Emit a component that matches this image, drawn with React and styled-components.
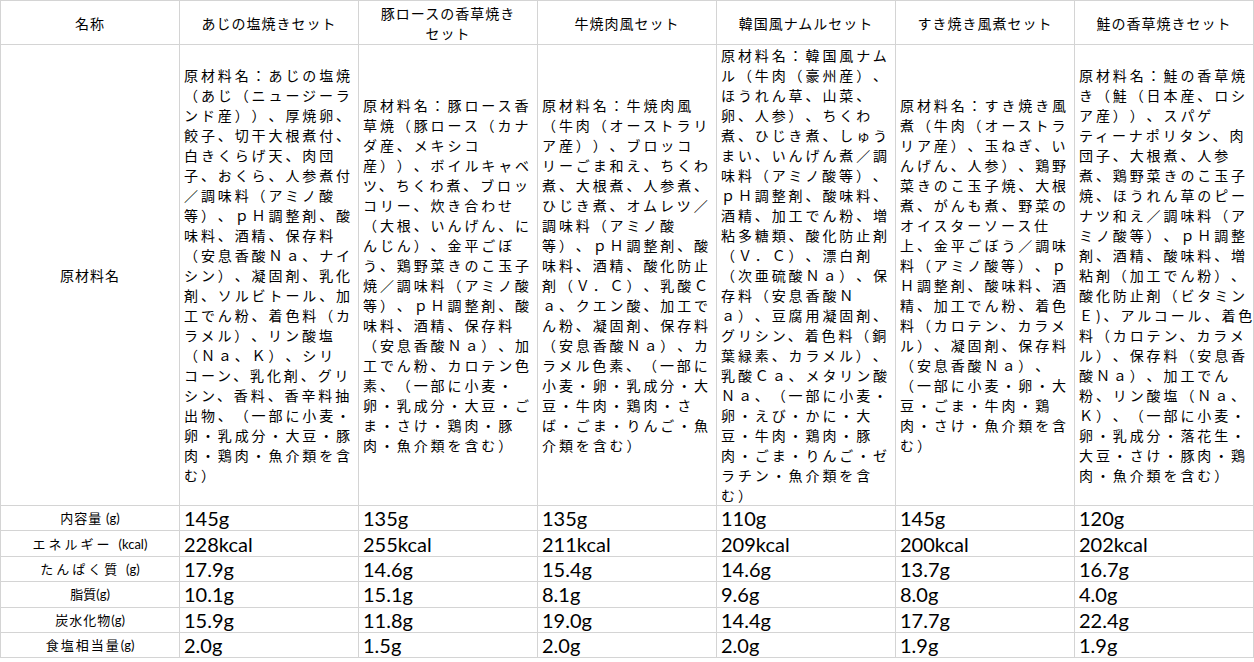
import styled, { createGlobalStyle } from 'styled-components';

const products = [
  {
    name: ['あじの塩焼きセット'],
    ingredients: [
      '原材料名：あじの塩焼',
      '（あじ（ニュージーラ',
      'ンド産））、厚焼卵、',
      '餃子、切干大根煮付、',
      '白きくらげ天、肉団',
      '子、おくら、人参煮付',
      '／調味料（アミノ酸',
      '等）、ｐＨ調整剤、酸',
      '味料、酒精、保存料',
      '（安息香酸Ｎａ、ナイ',
      'シン）、凝固剤、乳化',
      '剤、ソルビトール、加',
      '工でん粉、着色料（カ',
      'ラメル）、リン酸塩',
      '（Ｎａ、Ｋ）、シリ',
      'コーン、乳化剤、グリ',
      'シン、香料、香辛料抽',
      '出物、（一部に小麦・',
      '卵・乳成分・大豆・豚',
      '肉・鶏肉・魚介類を含',
      'む）',
    ],
    values: ['145g', '228kcal', '17.9g', '10.1g', '15.9g', '2.0g'],
  },
  {
    name: ['豚ロースの香草焼き', 'セット'],
    ingredients: [
      '原材料名：豚ロース香',
      '草焼（豚ロース（カナ',
      'ダ産、メキシコ',
      '産））、ボイルキャベ',
      'ツ、ちくわ煮、ブロッ',
      'コリー、炊き合わせ',
      '（大根、いんげん、に',
      'んじん）、金平ごぼ',
      'う、鶏野菜きのこ玉子',
      '焼／調味料（アミノ酸',
      '等）、ｐＨ調整剤、酸',
      '味料、酒精、保存料',
      '（安息香酸Ｎａ）、加',
      '工でん粉、カロテン色',
      '素、（一部に小麦・',
      '卵・乳成分・大豆・ご',
      'ま・さけ・鶏肉・豚',
      '肉・魚介類を含む）',
    ],
    values: ['135g', '255kcal', '14.6g', '15.1g', '11.8g', '1.5g'],
  },
  {
    name: ['牛焼肉風セット'],
    ingredients: [
      '原材料名：牛焼肉風',
      '（牛肉（オーストラリ',
      'ア産））、ブロッコ',
      'リーごま和え、ちくわ',
      '煮、大根煮、人参煮、',
      'ひじき煮、オムレツ／',
      '調味料（アミノ酸',
      '等）、ｐＨ調整剤、酸',
      '味料、酒精、酸化防止',
      '剤（Ｖ．Ｃ）、乳酸Ｃ',
      'ａ、クエン酸、加工で',
      'ん粉、凝固剤、保存料',
      '（安息香酸Ｎａ）、カ',
      'ラメル色素、（一部に',
      '小麦・卵・乳成分・大',
      '豆・牛肉・鶏肉・さ',
      'ば・ごま・りんご・魚',
      '介類を含む）',
    ],
    values: ['135g', '211kcal', '15.4g', '8.1g', '19.0g', '2.0g'],
  },
  {
    name: ['韓国風ナムルセット'],
    ingredients: [
      '原材料名：韓国風ナム',
      'ル（牛肉（豪州産）、',
      'ほうれん草、山菜、',
      '卵、人参）、ちくわ',
      '煮、ひじき煮、しゅう',
      'まい、いんげん煮／調',
      '味料（アミノ酸等）、',
      'ｐＨ調整剤、酸味料、',
      '酒精、加工でん粉、増',
      '粘多糖類、酸化防止剤',
      '（Ｖ．Ｃ）、漂白剤',
      '（次亜硫酸Ｎａ）、保',
      '存料（安息香酸Ｎ',
      'ａ）、豆腐用凝固剤、',
      'グリシン、着色料（銅',
      '葉緑素、カラメル）、',
      '乳酸Ｃａ、メタリン酸',
      'Ｎａ、（一部に小麦・',
      '卵・えび・かに・大',
      '豆・牛肉・鶏肉・豚',
      '肉・ごま・りんご・ゼ',
      'ラチン・魚介類を含',
      'む）',
    ],
    values: ['110g', '209kcal', '14.6g', '9.6g', '14.4g', '2.0g'],
  },
  {
    name: ['すき焼き風煮セット'],
    ingredients: [
      '原材料名：すき焼き風',
      '煮（牛肉（オーストラ',
      'リア産）、玉ねぎ、い',
      'んげん、人参）、鶏野',
      '菜きのこ玉子焼、大根',
      '煮、がんも煮、野菜の',
      'オイスターソース仕',
      '上、金平ごぼう／調味',
      '料（アミノ酸等）、ｐ',
      'Ｈ調整剤、酸味料、酒',
      '精、加工でん粉、着色',
      '料（カロテン、カラメ',
      'ル）、凝固剤、保存料',
      '（安息香酸Ｎａ）、',
      '（一部に小麦・卵・大',
      '豆・ごま・牛肉・鶏',
      '肉・さけ・魚介類を含',
      'む）',
    ],
    values: ['145g', '200kcal', '13.7g', '8.0g', '17.7g', '1.9g'],
  },
  {
    name: ['鮭の香草焼きセット'],
    ingredients: [
      '原材料名：鮭の香草焼',
      'き（鮭（日本産、ロシ',
      'ア産））、スパゲ',
      'ティーナポリタン、肉',
      '団子、大根煮、人参',
      '煮、鶏野菜きのこ玉子',
      '焼、ほうれん草のピー',
      'ナツ和え／調味料（ア',
      'ミノ酸等）、ｐＨ調整',
      '剤、酒精、酸味料、増',
      '粘剤（加工でん粉）、',
      '酸化防止剤（ビタミン',
      'Ｅ)、アルコール、着色',
      '料（カロテン、カラメ',
      'ル）、保存料（安息香',
      '酸Ｎａ）、加工でん',
      '粉、リン酸塩（Ｎａ、',
      'Ｋ）、（一部に小麦・',
      '卵・乳成分・落花生・',
      '大豆・さけ・豚肉・鶏',
      '肉・魚介類を含む）',
    ],
    values: ['120g', '202kcal', '16.7g', '4.0g', '22.4g', '1.9g'],
  },
];

const nutrients = [
  { label: '内容量 ', unit: '(g)', spacing: 1 },
  { label: 'エネルギー ', unit: '(kcal)', spacing: 3 },
  { label: 'たんぱく質 ', unit: '(g)', spacing: 3 },
  { label: '脂質', unit: '(g)', spacing: 0 },
  { label: '炭水化物', unit: '(g)', spacing: 1 },
  { label: '食塩相当量', unit: '(g)', spacing: 2 },
];

const App = () => {
  return (
    <>
      <GlobalStyle />
      <Table>
        <colgroup>
          {Array.from({ length: 7 }).map((_, i) => (
            <col key={i} style={{ width: 179 }} />
          ))}
        </colgroup>
        <tbody>
          <tr>
            <HeadCell>名称</HeadCell>
            {products.map((p) => (
              <HeadCell key={p.name.join('')}>
                {p.name.map((line) => (
                  <HeadLine key={line}>{line}</HeadLine>
                ))}
              </HeadCell>
            ))}
          </tr>
          <tr>
            <HeadCell>原材料名</HeadCell>
            {products.map((p) => (
              <IngredientCell key={p.name.join('')}>
                {p.ingredients.map((line, i) => (
                  <Line key={i}>{line}</Line>
                ))}
              </IngredientCell>
            ))}
          </tr>
          {nutrients.map((n, row) => (
            <tr key={n.label}>
              <LabelCell>
                <LabelText $spacing={n.spacing}>{n.label}</LabelText>
                <Unit>{n.unit}</Unit>
              </LabelCell>
              {products.map((p) => (
                <ValueCell key={p.name.join('')}>{p.values[row]}</ValueCell>
              ))}
            </tr>
          ))}
        </tbody>
      </Table>
    </>
  );
};

const GlobalStyle = createGlobalStyle`
  html, body {
    margin: 0;
    padding: 0;
    background: #ffffff;
  }
  body {
    font-family: "Noto Sans CJK JP", "Noto Sans", sans-serif;
    color: #000;
    text-spacing-trim: space-all;
  }
`;

const Table = styled.table`
  border-collapse: collapse;
  table-layout: fixed;
  width: 1253px;
`;

const Cell = styled.td`
  border: 1px solid #d4d4d4;
  padding: 0 4px;
`;

const HeadCell = styled(Cell)`
  height: 43px;
  text-align: center;
  vertical-align: middle;
  font-size: 14px;
  letter-spacing: 1px;
  line-height: 20px;
`;

const HeadLine = styled.div`
  white-space: nowrap;
`;

const IngredientCell = styled(Cell)`
  vertical-align: middle;
  font-size: 14px;
  letter-spacing: 2.9px;
  line-height: 20px;
`;

const Line = styled.div`
  white-space: nowrap;
  height: 20px;
`;

const LabelCell = styled(Cell)`
  height: 24.4px;
  text-align: center;
  vertical-align: middle;
  white-space: nowrap;
  font-size: 13px;
  line-height: 16px;
`;

const LabelText = styled.span`
  font-size: 13px;
  line-height: 16px;
  letter-spacing: ${(p) => p.$spacing}px;
`;

const Unit = styled.span`
  font-family: Lato, "Liberation Sans", sans-serif;
  font-size: 13px;
  line-height: 16px;
`;

const ValueCell = styled(Cell)`
  height: 24.4px;
  line-height: 24px;
  font-family: Lato, "Liberation Sans", sans-serif;
  font-size: 20px;
  white-space: nowrap;
  vertical-align: middle;
`;

export default App;
